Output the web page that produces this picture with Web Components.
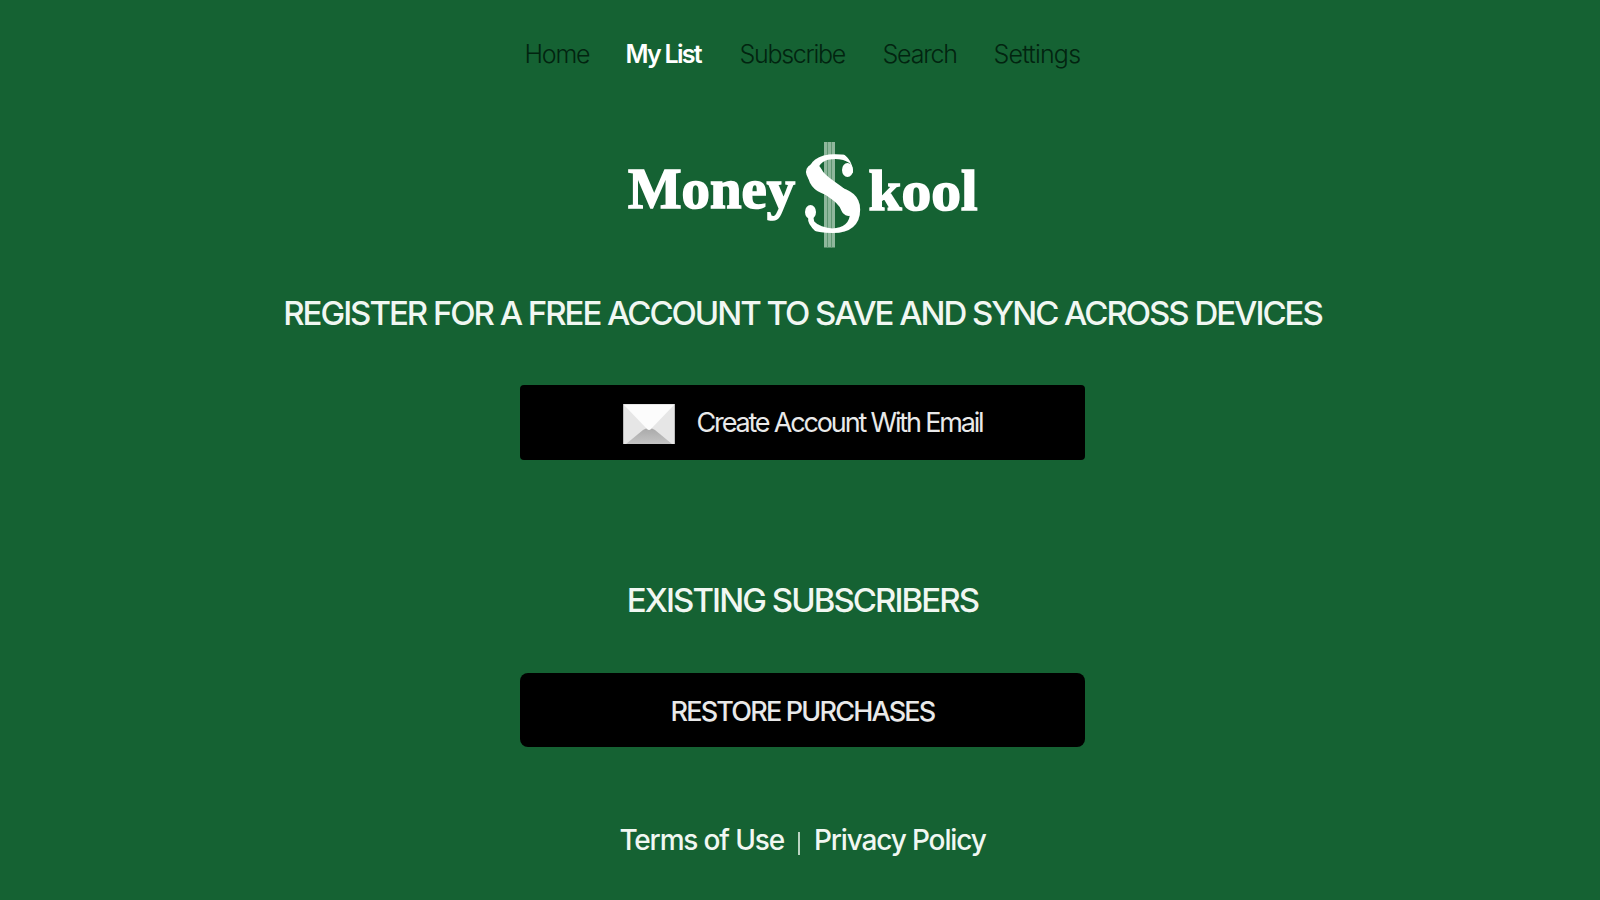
<!DOCTYPE html>
<html lang="en">
<head>
<meta charset="utf-8">
<title>MoneySkool</title>
<style>
   body {
      margin: 0;
      background: #156233;
      font-family: Inter, "Liberation Sans", sans-serif;
      color: #f1f7f2;
   }
</style>
</head>
<body>
<account-page>
   <nav-bar slot="nav">
      <nav-item style="--width: 65px; --track: -1.2px">Home</nav-item>
      <nav-item active style="--width: 78px; --track: -1.75px">My List</nav-item>
      <nav-item style="--width: 107px; --track: -1.3px">Subscribe</nav-item>
      <nav-item style="--width: 75px; --track: -1.2px">Search</nav-item>
      <nav-item style="--width: 87px; --track: -0.8px">Settings</nav-item>
   </nav-bar>
   <brand-logo></brand-logo>
   <section-title style="--top: 33px; --track: -2.03px">REGISTER FOR A FREE ACCOUNT TO SAVE AND SYNC ACROSS DEVICES</section-title>
   <action-button style="--top: 47px; --height: 75px; --radius: 4px; --track: -2.17px">
      <mail-icon slot="icon"></mail-icon>
      Create Account With Email
   </action-button>
   <section-title style="--top: 115px; --track: -1.93px">EXISTING SUBSCRIBERS</section-title>
   <action-button style="--top: 48px; --height: 74px; --radius: 8px; --weight: 500; --track: -1.8px; --nudge: 2px">RESTORE PURCHASES</action-button>
   <legal-links>
      <span slot="terms">Terms of Use</span>
      <span slot="privacy">Privacy Policy</span>
   </legal-links>
</account-page>

<script>
class BaseElement extends HTMLElement
{
   connectedCallback()
   {
      const template = document.createElement('template');
      template.innerHTML = this.constructor.markup;
      this.attachShadow({ mode: 'open' }).appendChild(template.content);
   }
}

class AccountPage extends BaseElement
{
   static markup = `
      <style>
         :host {
            display: flex;
            flex-direction: column;
            align-items: center;
            box-sizing: border-box;
            height: 900px;
            padding: 34px 0 0 5px;
            overflow: hidden;
         }
      </style>
      <slot name="nav"></slot>
      <slot></slot>
   `;
}

class NavBar extends BaseElement
{
   static markup = `
      <style>
         :host {
            display: flex;
            gap: 36px;
            height: 40px;
            font-size: 25px;
            line-height: 40px;
         }
      </style>
      <slot></slot>
   `;
}

class NavItem extends BaseElement
{
   static markup = `
      <style>
         :host {
            display: block;
            width: var(--width);
            letter-spacing: var(--track);
            white-space: nowrap;
            font-weight: 300;
            color: #022410;
         }
         :host([active]) {
            font-weight: 600;
            color: #fff;
         }
      </style>
      <slot></slot>
   `;
}

class BrandLogo extends BaseElement
{
   static markup = `
      <style>
         :host {
            display: block;
            height: 120px;
            margin-top: 61px;
         }
         svg {
            display: block;
            overflow: visible;
            font-family: "Liberation Serif", serif;
            font-weight: bold;
            fill: #fff;
            stroke: #fff;
         }
      </style>
      <svg width="354" height="120" viewBox="626 135 354 120">
         <defs>
            <clipPath id="rounded">
               <path d="M829 148C842 150 853 159 853 172V178H862V240H829C815 233 806 225 806 210V203H798V148Z"/>
            </clipPath>
         </defs>
         <g stroke="none" fill="#8fb79c">
            <rect x="824" y="142" width="11" height="105.5"/>
            <rect x="827" y="142" width="1" height="105.5" fill="#5f9672"/>
            <rect x="831" y="142" width="1" height="105.5" fill="#5f9672"/>
         </g>
         <text x="628" y="208.3" font-size="56" stroke-width="1.6" textLength="167" lengthAdjust="spacingAndGlyphs">Money</text>
         <g clip-path="url(#rounded)">
            <text transform="translate(800 231.5) scale(1.04 1)" font-size="117" font-weight="normal" stroke="none">S</text>
         </g>
         <!-- heavy spine and ball ends of the dollar sign -->
         <path d="M814 172C820 187 843 191 849 208" fill="none" stroke-width="16" stroke-linecap="round"/>
         <ellipse cx="847.5" cy="170" rx="5.5" ry="7" stroke="none"/>
         <ellipse cx="810.5" cy="212" rx="5.5" ry="7" stroke="none"/>
         <text x="868.5" y="210" font-size="56" stroke-width="1.6" textLength="109" lengthAdjust="spacingAndGlyphs">kool</text>
      </svg>
   `;
}

class SectionTitle extends BaseElement
{
   static markup = `
      <style>
         :host {
            display: block;
            height: 50px;
            margin-top: var(--top);
            font-size: 33px;
            line-height: 50px;
            font-weight: 500;
            letter-spacing: var(--track, -2px);
            white-space: nowrap;
         }
      </style>
      <slot></slot>
   `;
}

class ActionButton extends BaseElement
{
   static markup = `
      <style>
         :host {
            display: flex;
            align-items: center;
            justify-content: center;
            gap: 22px;
            box-sizing: border-box;
            width: 565px;
            height: var(--height);
            margin-top: var(--top);
            padding-top: var(--nudge, 0);
            border-radius: var(--radius);
            background: #000;
            color: #e9e9e9;
            font-size: 27px;
            font-weight: var(--weight, 400);
            letter-spacing: var(--track);
            white-space: nowrap;
         }
      </style>
      <slot name="icon"></slot>
      <span><slot></slot></span>
   `;
}

class MailIcon extends BaseElement
{
   static markup = `
      <style>
         :host {
            display: block;
            margin-top: 3px;
         }
         svg { display: block; }
      </style>
      <svg width="52" height="40" viewBox="0 0 52 40">
         <defs>
            <linearGradient id="fold" x1="0" y1="0" x2="0" y2="1">
               <stop offset="0" stop-color="#a9a9a9"/>
               <stop offset="1" stop-color="#c4c4c4"/>
            </linearGradient>
         </defs>
         <rect width="52" height="40" fill="#e6e6e6"/>
         <path d="M3 40L20 26Q26 22 32 26L49 40Z" fill="url(#fold)"/>
         <path d="M1 1H51L28 25Q26 27 24 25Z" fill="#fcfcfc"/>
         <path d="M.5 0V40M51.5 0V40" stroke="#bdbdbd"/>
      </svg>
   `;
}

class LegalLinks extends BaseElement
{
   static markup = `
      <style>
         :host {
            display: flex;
            align-items: center;
            gap: 14px;
            height: 40px;
            margin-top: 73px;
            font-size: 28px;
            line-height: 40px;
            font-weight: 500;
            letter-spacing: -1.15px;
            white-space: nowrap;
         }
         i {
            width: 2px;
            height: 23px;
            margin-top: 6px;
            background: #b9d3c1;
         }
      </style>
      <slot name="terms"></slot>
      <i></i>
      <slot name="privacy"></slot>
   `;
}

customElements.define('account-page', AccountPage);
customElements.define('nav-bar', NavBar);
customElements.define('nav-item', NavItem);
customElements.define('brand-logo', BrandLogo);
customElements.define('section-title', SectionTitle);
customElements.define('action-button', ActionButton);
customElements.define('mail-icon', MailIcon);
customElements.define('legal-links', LegalLinks);
</script>
</body>
</html>
